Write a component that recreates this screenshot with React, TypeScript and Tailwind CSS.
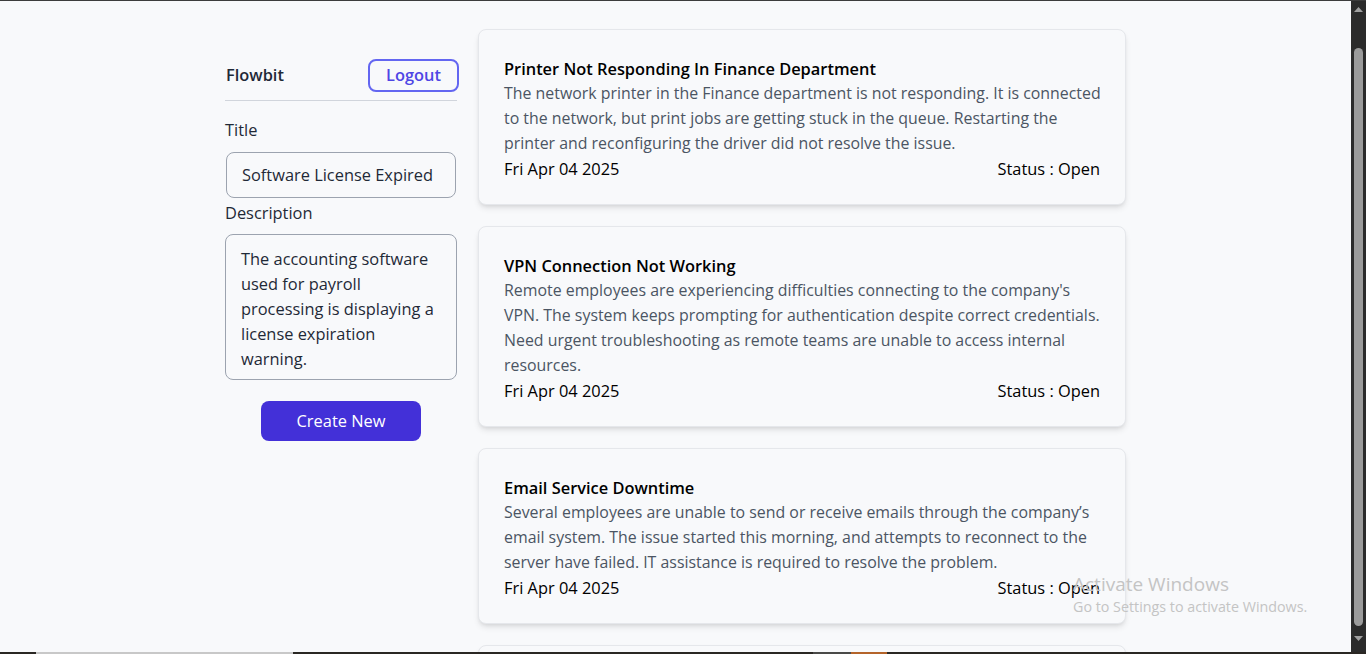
import React from "react";

const tickets = [
  {
    title: "Printer Not Responding In Finance Department",
    lines: [
      "The network printer in the Finance department is not responding. It is connected",
      "to the network, but print jobs are getting stuck in the queue. Restarting the",
      "printer and reconfiguring the driver did not resolve the issue.",
    ],
  },
  {
    title: "VPN Connection Not Working",
    lines: [
      "Remote employees are experiencing difficulties connecting to the company's",
      "VPN. The system keeps prompting for authentication despite correct credentials.",
      "Need urgent troubleshooting as remote teams are unable to access internal",
      "resources.",
    ],
  },
  {
    title: "Email Service Downtime",
    lines: [
      "Several employees are unable to send or receive emails through the company\u2019s",
      "email system. The issue started this morning, and attempts to reconnect to the",
      "server have failed. IT assistance is required to resolve the problem.",
    ],
  },
  {
    title: "Software License Expired",
    lines: [
      "The accounting software used for payroll processing is displaying a license expiration",
      "warning.",
    ],
  },
];

function Card({ title, lines }: { title: string; lines: string[] }) {
  return (
    <div className="shrink-0 rounded-lg border border-gray-200 bg-[#f8f9fb] px-[25px] pt-[26px] pb-[23px] shadow-md">
      <h2 className="text-[16.4px] leading-[25px] font-semibold text-black">{title}</h2>
      <p className="text-[15.9px] leading-[25px] text-[#4b5563]">
        {lines.map((l, i) => (
          <span key={i} className="block whitespace-nowrap">
            {l}
          </span>
        ))}
      </p>
      <div className="flex justify-between text-[16.4px] leading-[25px] text-black">
        <span>Fri Apr 04 2025</span>
        <span>Status : Open</span>
      </div>
    </div>
  );
}

export default function App() {
  return (
    <div
      className="relative flex h-[654px] w-[1366px] flex-col overflow-hidden bg-[#f8f9fb]"
      style={{ fontFamily: '"Open Sans", "Noto Sans", sans-serif' }}
    >
      <div className="h-px w-full bg-[#3c3c3c]" />
      <div className="flex min-h-0 flex-1">
        <div className="min-w-0 flex-1 overflow-hidden">
          <div className="mx-auto flex w-[901px] gap-[21px] pt-[28px]">
            <aside className="w-[232px] shrink-0 pt-[30px]">
              <div className="flex items-center justify-between border-b border-gray-300 pb-[8px] pl-px">
                <span className="text-[16.4px] font-semibold text-[#1f2937]">Flowbit</span>
                <button className="mr-[-2px] h-[33px] w-[91px] rounded-lg border-2 border-[#6366f1] text-[16.4px] font-semibold text-[#4f46e5]">
                  Logout
                </button>
              </div>
              <label className="mt-[16px] block text-[16.4px] leading-[25px] text-[#1f2937]">Title</label>
              <div className="mt-[10px] ml-px mr-px flex h-[46px] items-center whitespace-nowrap rounded-lg border border-[#9ca3af] px-[15px] text-[16.4px] text-[#1f2937]">
                Software License Expired
              </div>
              <label className="mt-[2px] block text-[16.4px] leading-[25px] text-[#1f2937]">Description</label>
              <div className="mt-[9px] h-[146px] rounded-lg border border-[#9ca3af] px-[15px] pt-[11px] text-[16.4px] leading-[25px] text-[#1f2937]">
                The accounting software used for payroll processing is displaying a license expiration warning.
              </div>
              <div className="mt-[21px] flex justify-center">
                <button className="h-[40px] w-[160px] rounded-lg bg-[#4330d8] text-[16.4px] text-white">
                  Create New
                </button>
              </div>
            </aside>
            <main className="flex w-[648px] shrink-0 flex-col gap-[21px]">
              {tickets.map((t) => (
                <Card key={t.title} title={t.title} lines={t.lines} />
              ))}
            </main>
          </div>
        </div>
        <div className="flex w-[15px] shrink-0 flex-col items-center bg-[#2b2b2b]">
          <svg width="9" height="6" viewBox="0 0 9 6" className="mt-[6px]">
            <path d="M4.5 0 L9 5 L0 5 Z" fill="#a0a0a0" />
          </svg>
          <div className="mt-[35px] h-[578px] w-[9px] rounded-full bg-[#9b9b9b]" />
          <svg width="9" height="6" viewBox="0 0 9 6" className="mt-[10px]">
            <path d="M0 0 L9 0 L4.5 5 Z" fill="#a0a0a0" />
          </svg>
        </div>
      </div>
      <div className="flex h-[2px] w-full bg-[#2a2723]">
        <div className="w-[36px]" />
        <div className="w-[257px] bg-[#c8c8c8]" />
        <div className="w-[520px]" />
        <div className="w-[38px] bg-[#4a4a48]" />
        <div className="w-[36px] bg-[#b4642a]" />
      </div>
      <div className="pointer-events-none absolute left-[1073px] top-[572px] text-[#c4c4c4]">
        <div className="text-[19px] leading-[25px]">Activate Windows</div>
        <div className="text-[14.3px] leading-[20px]">Go to Settings to activate Windows.</div>
      </div>
    </div>
  );
}
